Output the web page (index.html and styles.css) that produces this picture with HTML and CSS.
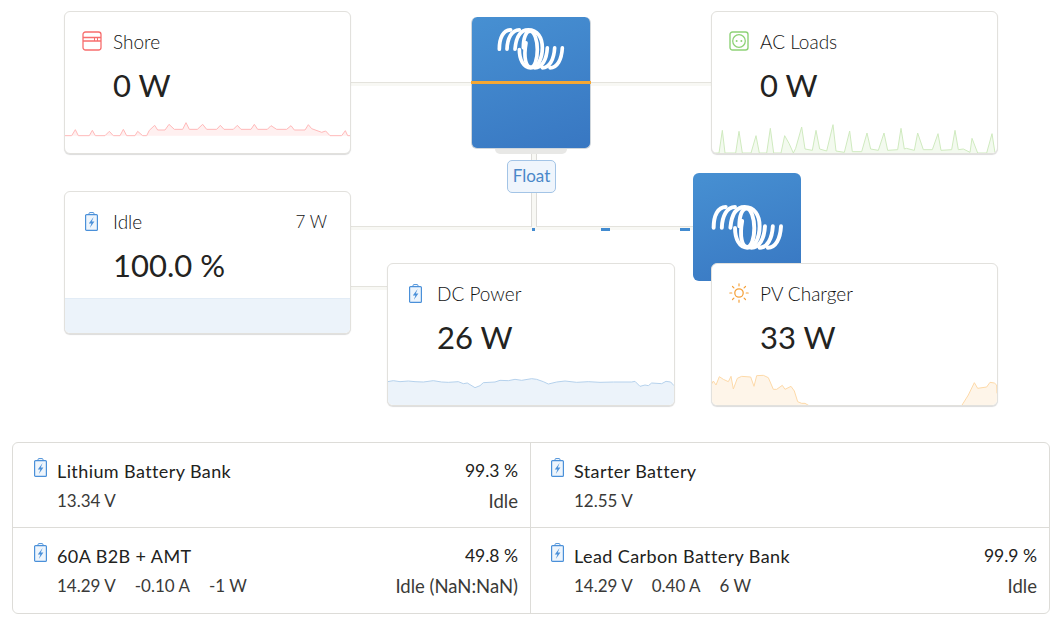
FILE: index.html
```html
<!DOCTYPE html>
<html lang="en">
  <head>
    <meta charset="UTF-8" />
    <meta name="viewport" content="width=device-width, initial-scale=1.0" />
    <title>Overview</title>
    <link rel="stylesheet" href="styles.css">
  </head>

  <body>
    <!-- shared icons -->
    <svg class="defs" aria-hidden="true">
      <symbol id="logo" viewBox="105 62 216 140">
        <g fill="none" stroke="#fff" stroke-width="11" stroke-linecap="round">
          <path d="M118 134C118 100 130 76 152 76" />
          <path d="M141 134C142 102 155 76 178 76" />
          <path d="M165 134C168 100 180 76 205 76C232 76 247 98 247 130C247 165 232 190 212 190C190 190 178 165 178 135" />
          <path d="M190 130C190 100 198 80 210 80C224 80 232 110 232 135C232 165 224 188 212 188C198 188 190 160 198 115" />
          <path d="M262 130C260 165 246 190 224 190" />
          <path d="M284 130C282 165 268 190 247 190" />
          <path d="M307 130C305 165 292 190 270 190" />
        </g>
      </symbol>
      <symbol id="battery" viewBox="0 0 13 19">
        <rect x="0.6" y="2.6" width="11.8" height="15.8" rx="1" fill="#eef5fc" stroke="#4a90d9" stroke-width="1.2" />
        <path d="M4 2.6v-1a1 1 0 0 1 1-1h3a1 1 0 0 1 1 1v1" fill="none" stroke="#4a90d9" />
        <path d="M8.6 5L3.8 11.4h2.6L4.8 16l4.6-6.4H6.8z" fill="#4a90d9" />
      </symbol>
    </svg>

    <div class="flow">
      <!-- connection lines -->
      <div class="wire wire-h wire-shore"></div>
      <div class="wire wire-h wire-loads"></div>
      <div class="wire wire-h wire-dc"></div>
      <div class="wire wire-h wire-idle"></div>
      <div class="wire wire-v wire-float"></div>
      <div class="dot dot-1"></div>
      <div class="dot dot-2"></div>
      <div class="dot dot-3"></div>

      <!-- inverter -->
      <div class="tab"></div>
      <div class="unit unit-inverter">
        <svg class="logo"><use href="#logo" /></svg>
        <div class="unit-line"></div>
      </div>
      <div class="badge">Float</div>
      <div class="unit unit-solar">
        <svg class="logo"><use href="#logo" /></svg>
      </div>

      <!-- Shore -->
      <section class="card card-shore">
        <svg class="spark" viewBox="15 21 855 423">
          <polygon class="shore-fill" points="13,392 35,392 46,374 55,392 88,392 97,376 106,392 135,392 148,379 160,392 180,392 190,373 200,392 225,392 233,379 248,392 260,392 268,376 284,361 293,375 315,375 327,358 343,373 368,373 378,353 388,373 412,373 428,358 440,373 470,373 481,361 492,373 520,373 532,361 543,373 573,373 583,358 593,373 622,373 633,362 650,373 680,373 693,362 703,375 735,375 745,359 755,371 785,382 797,378 810,392 845,392 856,377 863,392 870,392" />
          <polyline class="shore-line" points="13,392 35,392 46,374 55,392 88,392 97,376 106,392 135,392 148,379 160,392 180,392 190,373 200,392 225,392 233,379 248,392 260,392 268,376 284,361 293,375 315,375 327,358 343,373 368,373 378,353 388,373 412,373 428,358 440,373 470,373 481,361 492,373 520,373 532,361 543,373 573,373 583,358 593,373 622,373 633,362 650,373 680,373 693,362 703,375 735,375 745,359 755,371 785,382 797,378 810,392 845,392 856,377 863,392 870,392" />
        </svg>
        <div class="card-head">
          <svg class="icon" viewBox="0 0 20 20">
            <rect x="1" y="1" width="18" height="18" rx="2.5" fill="none" stroke="#f76e6e" stroke-width="1.3" />
            <path d="M1 6.5h18M1 10h18" fill="none" stroke="#f76e6e" stroke-width="1.3" />
            <path d="M12.5 6.5v3.5M15.5 6.5v3.5" fill="none" stroke="#f76e6e" />
          </svg>
          <span class="card-title">Shore</span>
        </div>
        <div class="card-value">0 W</div>
      </section>

      <!-- AC Loads -->
      <section class="card card-loads">
        <svg class="spark" viewBox="21 21 855 423">
          <polygon class="loads-fill" points="20,444 42,444 52,376 60,444 92,444 102,379 112,444 138,444 153,392 163,444 185,444 196,370 206,444 228,444 239,392 252,415 265,444 272,430 290,366 300,432 322,436 333,376 344,432 365,438 384,359 393,438 418,442 434,378 442,440 470,440 486,384 497,432 520,436 537,384 548,436 578,434 588,370 598,432 604,430 628,436 638,384 655,434 682,434 699,386 708,436 740,434 750,376 760,434 775,432 795,442 801,400 818,444 845,444 861,386 870,444" />
          <polyline class="loads-line" points="20,444 42,444 52,376 60,444 92,444 102,379 112,444 138,444 153,392 163,444 185,444 196,370 206,444 228,444 239,392 252,415 265,444 272,430 290,366 300,432 322,436 333,376 344,432 365,438 384,359 393,438 418,442 434,378 442,440 470,440 486,384 497,432 520,436 537,384 548,436 578,434 588,370 598,432 604,430 628,436 638,384 655,434 682,434 699,386 708,436 740,434 750,376 760,434 775,432 795,442 801,400 818,444 845,444 861,386 870,444" />
        </svg>
        <div class="card-head">
          <svg class="icon" viewBox="0 0 20 20">
            <rect x="1" y="1" width="18" height="18" rx="2.5" fill="none" stroke="#8ed277" stroke-width="1.4" />
            <circle cx="10" cy="10" r="6.3" fill="none" stroke="#8ed277" stroke-width="1.3" />
            <circle cx="7.6" cy="10" r="1" fill="#8ed277" />
            <circle cx="12.4" cy="10" r="1" fill="#8ed277" />
          </svg>
          <span class="card-title">AC Loads</span>
        </div>
        <div class="card-value">0 W</div>
      </section>

      <!-- Idle -->
      <section class="card card-idle">
        <div class="soc"></div>
        <div class="card-head">
          <svg class="icon icon-battery"><use href="#battery" /></svg>
          <span class="card-title">Idle</span>
          <span class="card-extra">7 W</span>
        </div>
        <div class="card-value">100.0 %</div>
      </section>

      <!-- DC Power -->
      <section class="card card-dc">
        <svg class="spark" viewBox="24 27 858 423">
          <polygon class="dc-fill" points="22,455 22,380 40,377 60,380 85,378 105,380 130,381 160,377 185,381 205,382 235,380 250,386 262,384 285,398 300,392 310,383 345,381 360,376 385,377 405,373 425,376 455,371 470,373 490,380 505,387 530,381 555,378 590,382 625,380 660,382 700,381 755,381 765,379 780,394 795,390 805,392 815,384 845,386 858,379 872,381 882,392 882,455" />
          <polyline class="dc-line" points="22,380 40,377 60,380 85,378 105,380 130,381 160,377 185,381 205,382 235,380 250,386 262,384 285,398 300,392 310,383 345,381 360,376 385,377 405,373 425,376 455,371 470,373 490,380 505,387 530,381 555,378 590,382 625,380 660,382 700,381 755,381 765,379 780,394 795,390 805,392 815,384 845,386 858,379 872,381 882,392" />
        </svg>
        <div class="card-head">
          <svg class="icon icon-battery"><use href="#battery" /></svg>
          <span class="card-title">DC Power</span>
        </div>
        <div class="card-value">26 W</div>
      </section>

      <!-- PV Charger -->
      <section class="card card-pv">
        <svg class="spark" viewBox="21 27 855 423">
          <polygon class="pv-fill" points="18,455 18,390 25,378 33,390 43,365 55,373 70,380 78,364 85,402 97,370 110,364 137,366 147,394 155,362 175,361 190,368 205,403 215,403 232,391 240,403 258,394 268,408 278,440 290,445 300,445 312,455" />
          <polyline class="pv-line" points="18,390 25,378 33,390 43,365 55,373 70,380 78,364 85,402 97,370 110,364 137,366 147,394 155,362 175,361 190,368 205,403 215,403 232,391 240,403 258,394 268,408 278,440 290,445 300,445 312,452" />
          <polygon class="pv-fill" points="770,455 790,420 808,383 818,400 845,396 855,382 868,384 875,390 876,415 880,455" />
          <polyline class="pv-line" points="770,452 790,420 808,383 818,400 845,396 855,382 868,384 875,390 876,415" />
        </svg>
        <div class="card-head">
          <svg class="icon" viewBox="0 0 20 20">
            <circle cx="10" cy="10" r="4.2" fill="none" stroke="#f5a23c" stroke-width="1.3" />
            <path d="M10 .8v2M10 17.2v2M.8 10h2M17.2 10h2M3.5 3.5l1.4 1.4M15.1 15.1l1.4 1.4M3.5 16.5l1.4-1.4M15.1 4.9l1.4-1.4" fill="none" stroke="#f5a23c" stroke-width="1.2" stroke-linecap="round" />
          </svg>
          <span class="card-title">PV Charger</span>
        </div>
        <div class="card-value">33 W</div>
      </section>
    </div>

    <!-- batteries -->
    <div class="batteries">
      <div class="battery">
        <svg class="icon-small"><use href="#battery" /></svg>
        <div class="battery-body">
          <div class="battery-row battery-top"><span>Lithium Battery Bank</span><span class="pct">99.3 %</span></div>
          <div class="battery-row"><span>13.34 V</span><span class="status">Idle</span></div>
        </div>
      </div>
      <div class="battery">
        <svg class="icon-small"><use href="#battery" /></svg>
        <div class="battery-body">
          <div class="battery-row battery-top"><span>Starter Battery</span></div>
          <div class="battery-row"><span>12.55 V</span></div>
        </div>
      </div>
      <div class="battery">
        <svg class="icon-small"><use href="#battery" /></svg>
        <div class="battery-body">
          <div class="battery-row battery-top"><span>60A B2B + AMT</span><span class="pct">49.8 %</span></div>
          <div class="battery-row">
            <span class="readings"><span>14.29 V</span><span>-0.10 A</span><span>-1 W</span></span>
            <span class="status">Idle (NaN:NaN)</span>
          </div>
        </div>
      </div>
      <div class="battery">
        <svg class="icon-small"><use href="#battery" /></svg>
        <div class="battery-body">
          <div class="battery-row battery-top"><span>Lead Carbon Battery Bank</span><span class="pct">99.9 %</span></div>
          <div class="battery-row">
            <span class="readings"><span>14.29 V</span><span>0.40 A</span><span>6 W</span></span>
            <span class="status">Idle</span>
          </div>
        </div>
      </div>
    </div>
  </body>
</html>
```

FILE: styles.css
```css
* {
  margin: 0;
  padding: 0;
  box-sizing: border-box;
}

body {
  background: #fff;
  color: #222220;
  font-family: "Lato", "Open Sans", sans-serif;
}

.defs {
  position: absolute;
  width: 0;
  height: 0;
}

/* diagram: every node sits on a free canvas */
.flow {
  position: relative;
  height: 442px;
}

.wire {
  position: absolute;
  background: #f8f8f4;
}

.wire-h {
  height: 4px;
  border-top: 1px solid #e4e3dd;
}

.wire-v {
  width: 6px;
  border-left: 1px solid #dddcd8;
  border-right: 1px solid #dddcd8;
}

.wire-shore {
  left: 351px;
  top: 82px;
  width: 121px;
}

.wire-loads {
  left: 591px;
  top: 82px;
  width: 121px;
}

.wire-idle {
  left: 351px;
  top: 226px;
  width: 342px;
}

.wire-dc {
  left: 351px;
  top: 286px;
  width: 37px;
}

.wire-float {
  left: 531px;
  top: 149px;
  height: 78px;
}

.dot {
  position: absolute;
  top: 228px;
  height: 3px;
  background: #428bd0;
}

.dot-1 {
  left: 532px;
  width: 3px;
}

.dot-2 {
  left: 601px;
  width: 9px;
}

.dot-3 {
  left: 680px;
  width: 10px;
}

.unit {
  position: absolute;
  background: linear-gradient(160deg, #4790d2, #3877c2);
  border-radius: 6px;
}

.unit-inverter {
  left: 471px;
  top: 17px;
  width: 120px;
  height: 132px;
  border: 1px solid #cfd6dc;
  border-top: 0;
}

.unit-solar {
  left: 693px;
  top: 173px;
  width: 108px;
  height: 108px;
}

.logo {
  position: absolute;
  display: block;
}

.unit-inverter .logo {
  left: 23px;
  top: 8px;
  width: 72px;
  height: 47px;
}

.unit-solar .logo {
  left: 16px;
  top: 29px;
  width: 77px;
  height: 50px;
}

.unit-line {
  position: absolute;
  left: -1px;
  right: -1px;
  top: 64px;
  height: 3px;
  background: #f5a733;
}

.tab {
  position: absolute;
  left: 495px;
  top: 149px;
  width: 72px;
  height: 5px;
  background: #e8e8e6;
  border-radius: 0 0 5px 5px;
}

.badge {
  position: absolute;
  left: 507px;
  top: 160px;
  width: 49px;
  height: 33px;
  line-height: 29px;
  text-align: center;
  font-size: 17px;
  color: #4a88c9;
  background: #eff5fc;
  border: 1px solid #a3c4e6;
  border-radius: 5px;
}

.card {
  position: absolute;
  width: 287px;
  height: 143px;
  background: #fff;
  border: 1px solid #e2e1dd;
  border-radius: 6px;
  box-shadow: 0 1px 1px rgba(0, 0, 0, 0.14);
  overflow: hidden;
}

.card-shore {
  left: 64px;
  top: 11px;
}

.card-loads {
  left: 711px;
  top: 11px;
}

.card-idle {
  left: 64px;
  top: 191px;
}

.card-dc {
  left: 387px;
  top: 263px;
  width: 288px;
}

.card-pv {
  left: 711px;
  top: 263px;
}

.spark {
  position: absolute;
  left: 0;
  top: 0;
  width: 100%;
  height: 100%;
}

.spark polyline {
  fill: none;
  stroke-width: 3;
}

.spark polygon {
  stroke: none;
}

.shore-fill {
  fill: #fff0f0;
}

.shore-line {
  stroke: #ffb9b9;
}

.loads-fill {
  fill: #f3faef;
}

.loads-line {
  stroke: #cfeabf;
}

.dc-fill {
  fill: #ecf3fa;
}

.dc-line {
  stroke: #b5d1ec;
}

.pv-fill {
  fill: #fef5e9;
}

.pv-line {
  stroke: #fdd9a8;
}

.soc {
  position: absolute;
  left: 0;
  right: 0;
  bottom: 0;
  height: 35px;
  background: #ecf3fa;
  border-top: 1px solid #e2ecf6;
}

.card-head {
  position: relative;
  display: flex;
  align-items: center;
  height: 22px;
  margin: 18px 23px 0 17px;
}

.card-dc .card-head {
  margin-left: 18px;
}

.icon {
  width: 20px;
  height: 20px;
  margin-right: 11px;
  flex: none;
}

.icon-battery {
  width: 13px;
  height: 19px;
  margin-left: 3px;
  margin-right: 15px;
}

.card-title {
  flex: 1;
  font-size: 19px;
  font-weight: 300;
  color: #111;
}

.card-extra {
  font-size: 17px;
  font-weight: 300;
  color: #111;
}

.card-value {
  position: relative;
  margin: 11px 0 0 48px;
  font-size: 31px;
  line-height: 44px;
  font-weight: 400;
  color: #232321;
}

.card-dc .card-value {
  margin-left: 49px;
}

/* battery list */
.batteries {
  display: grid;
  grid-template-columns: 518px 1fr;
  width: 1038px;
  margin-left: 12px;
  border: 1px solid #dddcd8;
  border-radius: 6px;
}

.battery {
  display: flex;
  height: 85px;
  padding: 14px 12px 0 21px;
}

.battery:nth-child(even) {
  padding-left: 20px;
}

.battery:nth-child(odd) {
  border-right: 1px solid #dddcd8;
}

.battery:nth-child(-n + 2) {
  border-bottom: 1px solid #dddcd8;
}

.icon-small {
  width: 13px;
  height: 19px;
  flex: none;
  margin: 1px 10px 0 0;
}

.battery-body {
  flex: 1;
}

.battery-row {
  display: flex;
  justify-content: space-between;
  height: 30px;
  line-height: 28px;
  font-size: 17px;
  color: #3a3a38;
}

.battery-top {
  font-size: 18px;
  letter-spacing: 0.4px;
  color: #222220;
}

.pct {
  font-size: 17.5px;
  letter-spacing: 0;
}

.status {
  font-size: 18.5px;
}

.readings {
  display: flex;
  gap: 19px;
}
```
